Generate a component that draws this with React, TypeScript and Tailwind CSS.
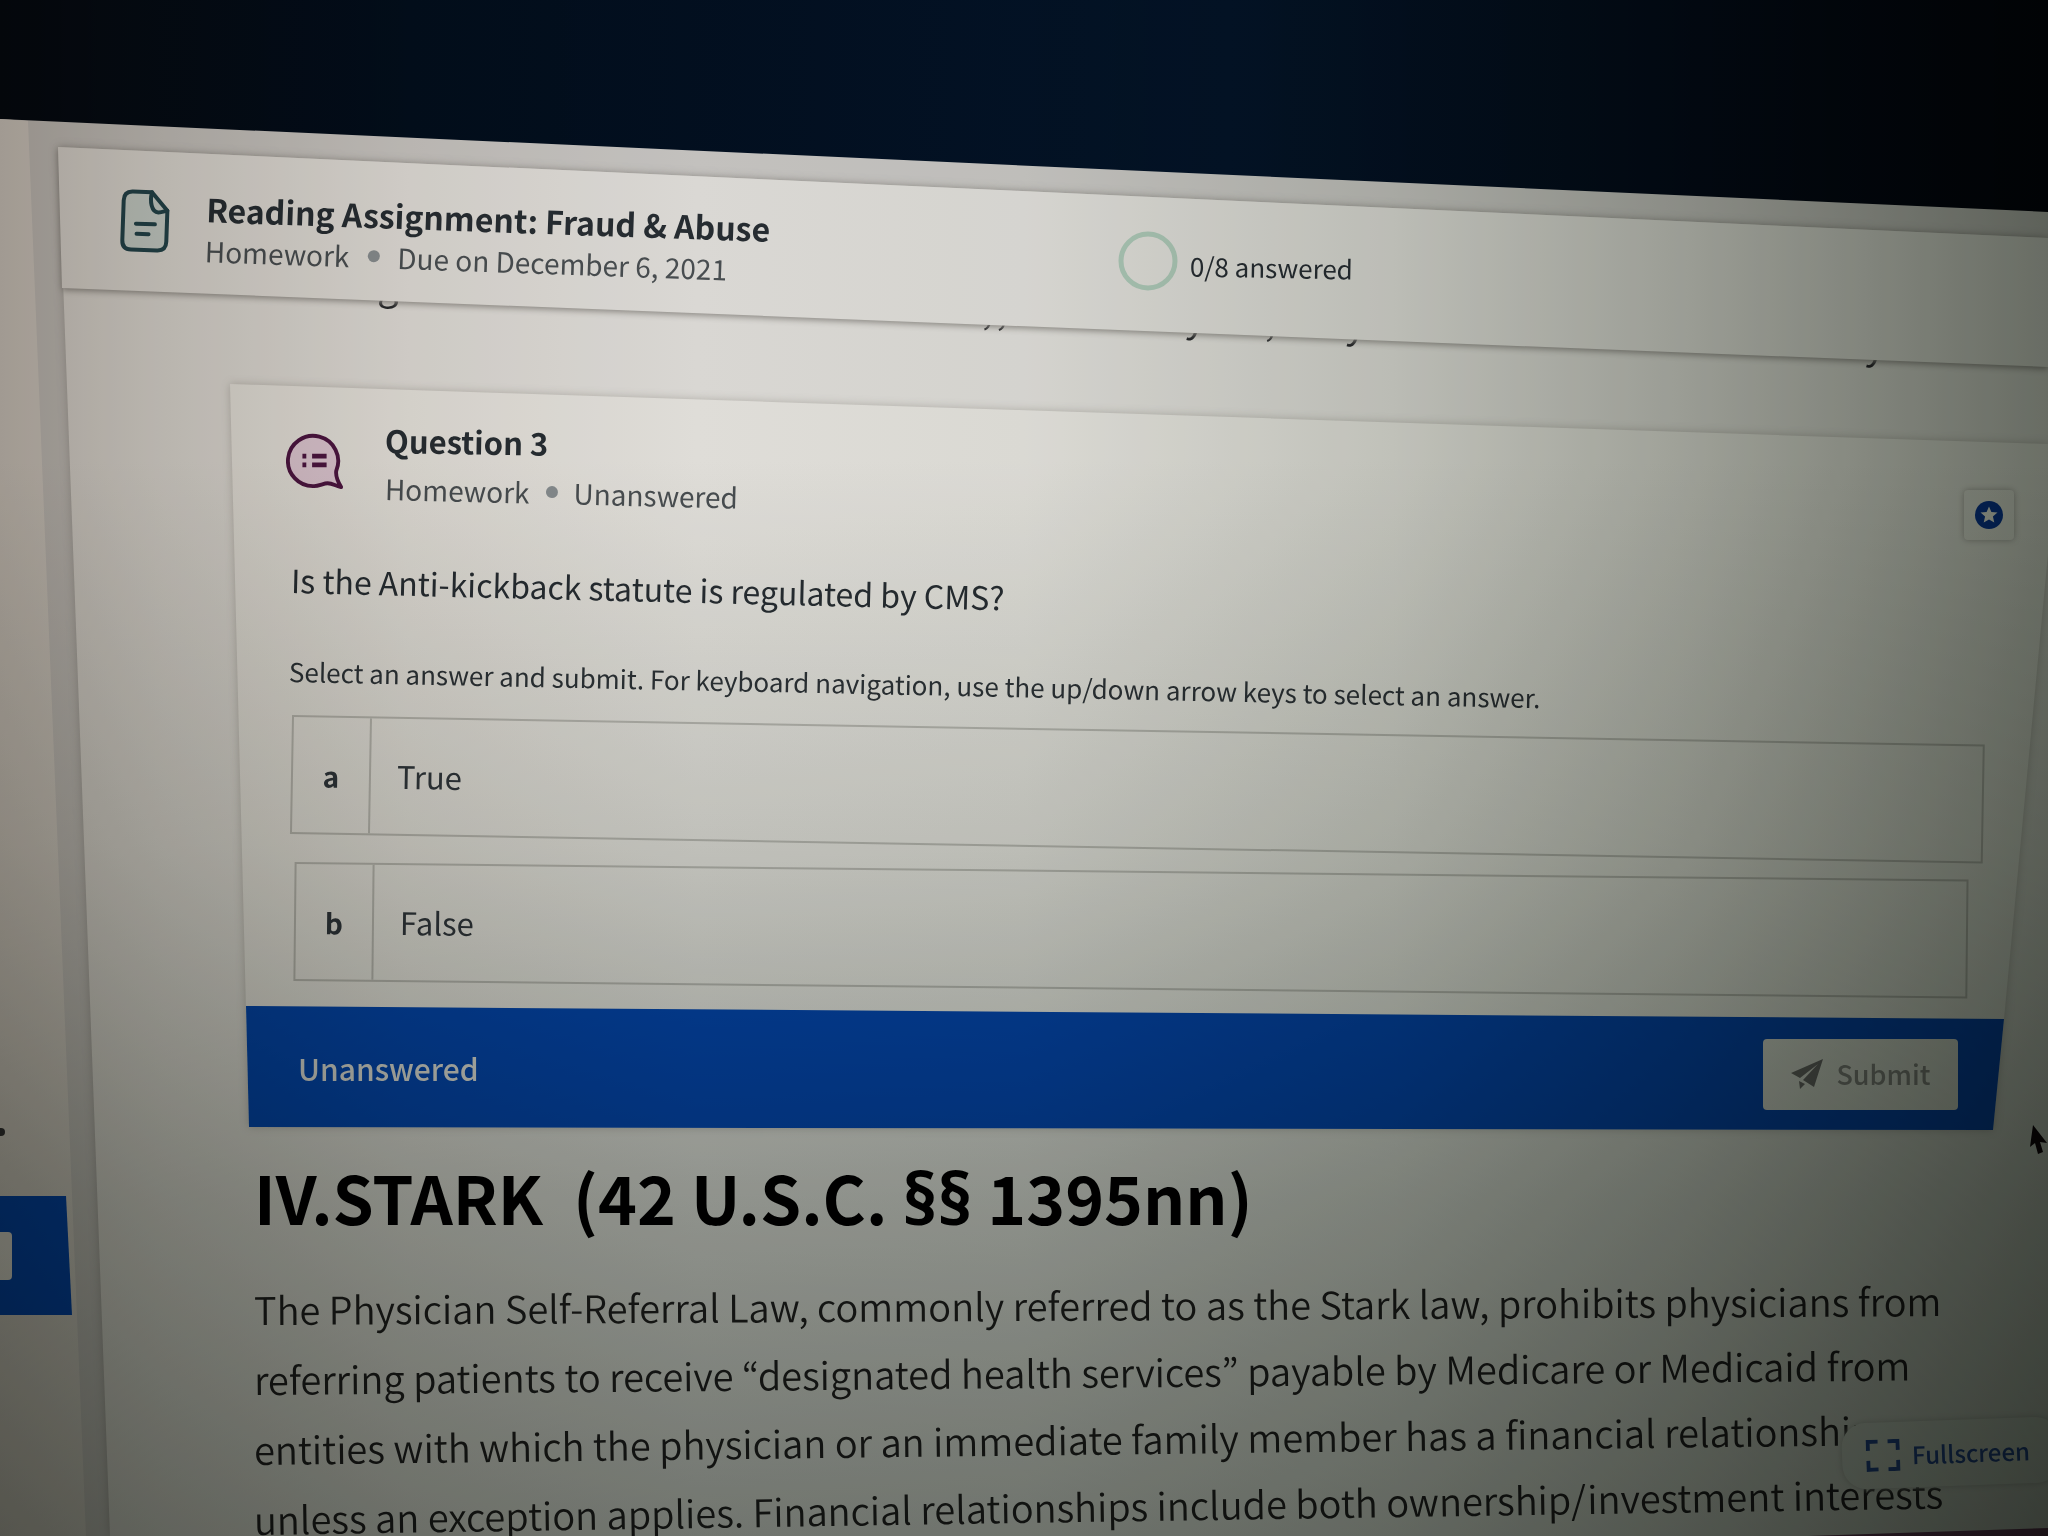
import React from "react";

const PARAGRAPH = [
  { text: "The Physician Self-Referral Law, commonly referred to as the Stark law, prohibits physicians from", tilt: "-rotate-[0.3deg]" },
  { text: "referring patients to receive “designated health services” payable by Medicare or Medicaid from", tilt: "-rotate-[0.5deg]" },
  { text: "entities with which the physician or an immediate family member has a financial relationship", tilt: "-rotate-[0.7deg]" },
  { text: "unless an exception applies. Financial relationships include both ownership/investment interests", tilt: "-rotate-[0.9deg]" },
];

function DocumentIcon() {
  return (
    <svg viewBox="0 0 50 64" className="h-16 w-[50px] rotate-2" fill="none" stroke="#23434a" strokeWidth="4" strokeLinejoin="round" strokeLinecap="round" aria-hidden="true">
      <path d="M12 3h19l16 18v31q0 9-9 9H12q-9 0-9-9V12q0-9 9-9z" fill="#c3ccc8" />
      <path d="M31 3c-2 9 0 20 7 20 4 0 7-2 9-2" />
      <path d="M16 35h19M17 45h12" />
    </svg>
  );
}

function QuestionIcon() {
  return (
    <svg viewBox="0 0 60 60" className="size-[58px]" fill="none" stroke="#4b1540" strokeWidth="4" strokeLinejoin="round" aria-hidden="true">
      <path d="M52 40A26 26 0 1 0 29 56c5 0 10-3 14-3 5 0 9 3 14 4-3-5-6-11-5-17z" fill="#d8c3cf" />
      <path d="M27 25h15M27 34h15" strokeWidth="5" />
      <path d="M17 25h4M17 34h4" strokeWidth="5" />
    </svg>
  );
}

function Answer({ letter, label, className }: { letter: string; label: string; className: string }) {
  return (
    <label className={`flex h-[119px] origin-left cursor-pointer items-stretch border-2 border-[#b4b3ad] ${className}`}>
      <input type="radio" name="answer" value={letter} className="peer sr-only" />
      <span className="flex w-[78px] shrink-0 items-center justify-center border-r-2 border-[#b4b3ad] text-[28px] font-bold text-[#30363b]">{letter}</span>
      <span className="flex items-center pl-[26px] text-[31px] text-[#30363b]">{label}</span>
    </label>
  );
}

export default function App() {
  return (
    <div className="relative min-h-screen overflow-hidden bg-[linear-gradient(90deg,#05090f,#020d1b_20%,#031327_60%,#01050a)] pt-[119px] font-['Noto_Sans_CJK_KR','Noto_Sans',sans-serif] text-[#262c31]">
      <div className="relative flex min-h-[calc(100vh-119px)]">
        <div className="absolute inset-0 bg-[#c3c1be] [clip-path:polygon(0_0,100%_93px,100%_100%,0_100%)]" />

        <aside className="relative w-[58px] shrink-0">
          <div className="absolute inset-y-0 left-0 w-[86px] bg-[#d2cec8] [clip-path:polygon(0_0,28px_2px,100%_100%,0_100%)]" />
          <div className="relative h-[1077px]">
            <span className="absolute right-full bottom-[60px] -mr-[5px] size-2 rounded-full bg-[#333]" />
          </div>
          <div className="relative flex h-[119px] w-[72px] items-center bg-[#0346ae] [clip-path:polygon(0_0,66px_0,100%_100%,0_100%)]">
            <span className="h-12 w-3 rounded-r bg-[#dedcd6]" />
          </div>
        </aside>

        <div className="relative flex min-w-0 flex-1 flex-col pt-7">
          <div className="absolute inset-0 top-7 drop-shadow-[0_0_5px_#9f9c98]">
            <div className="size-full bg-[#d9d7d3] [clip-path:polygon(0_0,100%_91px,100%_100%,52px_100%)]" />
          </div>

          <header className="relative z-10 h-[141px]">
            <div className="absolute inset-x-0 top-0 -bottom-[79px] drop-shadow-[0_2px_3px_#8a8782]">
              <div className="size-full bg-[#dad8d4] [clip-path:polygon(0_0,100%_91px,100%_100%,4px_141px)]" />
            </div>
            <div className="relative flex">
              <div className="pt-[42px] pl-[62px]"><DocumentIcon /></div>
              <div className="w-[948px] origin-left rotate-[2deg] pt-[38px] pl-9">
                <h1 className="text-[32px] leading-[44px] font-bold whitespace-nowrap">Reading Assignment: Fraud &amp; Abuse</h1>
                <p className="flex items-center text-[28px] leading-10 whitespace-nowrap text-[#484d50]">
                  Homework
                  <span className="mx-[18px] size-3 rounded-full bg-[#858b8e]" />
                  Due on December 6, 2021
                </p>
              </div>
              <div className="flex items-center gap-3 pt-[84px]">
                <svg viewBox="0 0 60 60" className="size-[60px]" aria-hidden="true">
                  <circle cx="30" cy="30" r="27" fill="none" stroke="#a9c3b3" strokeWidth="5" />
                </svg>
                <span className="rotate-[1deg] pt-3 text-[26px] leading-9 whitespace-nowrap">0/8 answered</span>
              </div>
            </div>
          </header>

          <div aria-hidden="true" className="relative h-24 text-[38px] leading-[38px] text-[#1d1f22]">
            <div className="-mt-6 ml-[320px] flex origin-left rotate-[2.3deg]">
              <span>g</span>
              <span className="ml-[584px]">,</span>
              <span className="ml-1">,</span>
              <span className="ml-[178px]">y</span>
              <span className="ml-[60px]">,</span>
              <span className="ml-[70px]">y</span>
              <span className="ml-[500px]">y</span>
            </div>
          </div>

          <section className="relative ml-[172px] h-[746px]">
            <div className="absolute inset-0 drop-shadow-[0_0_4px_#b0ada7]">
              <div className="size-full bg-[#dfddd8] [clip-path:polygon(0_0,100%_60px,100%_170px,calc(100%_-_44px)_635px,calc(100%_-_55px)_100%,19px_743px)]" />
            </div>
            <div className="relative flex pt-12 pl-14">
              <QuestionIcon />
              <div className="flex-1 pl-[41px]">
                <h2 className="-mt-3 origin-left rotate-[1deg] text-[31px] leading-10 font-bold">Question 3</h2>
                <p className="mt-2 flex origin-left rotate-[1.4deg] items-center text-[28px] leading-10 whitespace-nowrap text-[#484d50]">
                  Homework
                  <span className="mx-4 size-3 rounded-full bg-[#858b8e]" />
                  Unanswered
                </p>
              </div>
              <button aria-label="Bookmark question" className="mt-[58px] mr-[34px] flex size-[50px] items-center justify-center rounded bg-[#dfddd7] shadow-[0_0_6px_#a09d98]">
                <svg viewBox="0 0 28 28" className="size-7" aria-hidden="true">
                  <circle cx="14" cy="14" r="14" fill="#063793" />
                  <path d="M14 5.5l2.4 5.6 6.1.5-4.6 4 1.4 6-5.3-3.2-5.3 3.2 1.4-6-4.600-4 6.100-.5z" fill="#e8e6df" />
                </svg>
              </button>
            </div>
            <p className="relative mt-[19px] ml-[61px] origin-left rotate-[1.4deg] text-[32px] leading-10 whitespace-nowrap">Is the Anti-kickback statute is regulated by CMS?</p>
            <p className="relative mt-[52px] ml-[59px] origin-left rotate-[1.2deg] text-[26px] leading-10 whitespace-nowrap text-[#2c3236]">
              Select an answer and submit. For keyboard navigation, use the up/down arrow keys to select an answer.
            </p>
            <div role="radiogroup" aria-label="Answers" className="relative mt-6 flex flex-col gap-7">
              <Answer letter="a" label="True" className="mr-[64px] ml-[61px] rotate-[1deg]" />
              <Answer letter="b" label="False" className="mr-[80px] ml-[64px] rotate-[0.6deg]" />
            </div>
            <div className="absolute inset-x-0 bottom-0 mr-[44px] ml-4 flex h-[124px] items-center justify-between bg-[#0346ae] pr-[46px] pl-[52px] [clip-path:polygon(0_0,100%_13px,calc(100%_-_11px)_100%,3px_121px)]">
              <span className="text-[30px] font-medium text-[#dcdcd8]">Unanswered</span>
              <button className="mt-3 flex h-[71px] w-[195px] items-center justify-center gap-3 rounded bg-[#dad9d3] text-[27px] font-medium text-[#858581]">
                <svg viewBox="0 0 34 32" className="h-8 w-[34px]" fill="#6b6b68" aria-hidden="true">
                  <path d="M33 1L1 15l9 5L28 6 13 22l11 7z" />
                  <path d="M9 23l6 3-5 5z" />
                </svg>
                Submit
              </button>
            </div>
          </section>

          <article className="relative -mb-12 pl-[196px]">
            <h2 className="pt-6 text-[66px] leading-[84px] font-bold whitespace-pre text-black">
              {"IV.STARK  (42 U.S.C. "}
              <span className="font-['Noto_Sans'] text-[72px] leading-none">§§</span>
              {" 1395nn)"}
            </h2>
            <p className="pt-9 text-[38px] leading-[70px] font-[350] text-[#20211f]">
              {PARAGRAPH.map((line) => (
                <span key={line.tilt} className={`block origin-left whitespace-nowrap ${line.tilt}`}>{line.text}</span>
              ))}
            </p>
          </article>
        </div>
      </div>

      <button className="absolute -right-3 bottom-[50px] flex h-[66px] w-[218px] -rotate-2 items-center gap-3 rounded-3xl bg-[#d8d9d3] pl-6 text-[24px] font-medium text-[#244b96] shadow-[0_0_6px_#b0b0aa]">
        <svg viewBox="0 0 34 32" className="h-8 w-[34px]" fill="none" stroke="currentColor" strokeWidth="4" aria-hidden="true">
          <path d="M2 11V2h10M22 2h10v9M32 21v9H22M12 30H2v-9" />
        </svg>
        Fullscreen
      </button>

      <svg viewBox="0 0 18 30" className="absolute right-0 bottom-[381px] h-[30px] w-[18px]" aria-hidden="true">
        <path d="M3 0l14 18-7-1 3 10-5 2-3-11-5 4z" fill="#0d0808" />
      </svg>
      <div className="absolute right-0 bottom-0 h-2 w-60 bg-[#6b3f5c] [clip-path:polygon(0_100%,100%_0,100%_100%)]" />
      <div className="pointer-events-none absolute inset-0 z-20 bg-[linear-gradient(180deg,#fff_30%,#dcdedc_55%,#a9aeaa_78%,#858b86),linear-gradient(90deg,#c4bfba,#dad7d3_8%,#f2f0ee_20%,#fff_34%,#fafbfa_50%,#dcdfdb_68%,#b6bab4_82%,#7a8078)] bg-blend-multiply mix-blend-multiply" />
    </div>
  );
}
